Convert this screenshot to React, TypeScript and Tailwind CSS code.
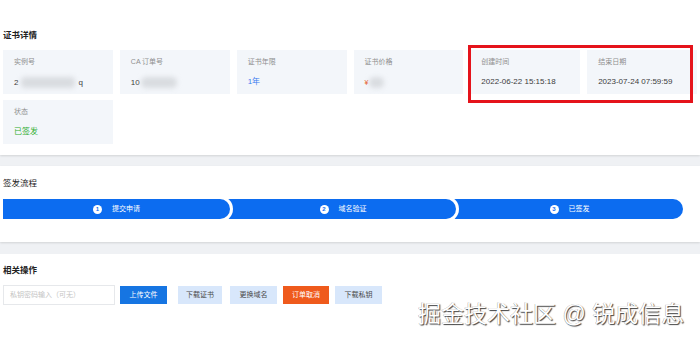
import React from "react";

const font = { fontFamily: '"Liberation Sans", "Noto Sans CJK SC", sans-serif' };

type Info = { label: string; value: React.ReactNode };

function Blur({ w, round }: { w: number; round?: boolean }) {
  return (
    <span
      className={
        "inline-block h-[11px] bg-[#d9dce0] blur-[2.5px] align-middle " +
        (round ? "rounded-full" : "rounded-[4px]")
      }
      style={{ width: w }}
    />
  );
}

function InfoCard({ label, value }: Info) {
  return (
    <div className="h-[44px] bg-[#f3f6fa] pl-[11px] pt-[8px] flex flex-col">
      <div className="text-[7px] leading-[8px] text-[#8f8f8f]">{label}</div>
      <div className="mt-[11px] text-[8px] leading-[10px] text-[#3c3c3c] whitespace-nowrap flex items-center">
        {value}
      </div>
    </div>
  );
}

function Step({
  n,
  text,
  className,
  z,
}: {
  n: number;
  text: string;
  className: string;
  z: string;
}) {
  return (
    <div
      className={
        "relative h-[20px] bg-[#0c6cf0] rounded-r-full ring-[3px] ring-white flex items-center justify-center gap-[10px] text-white text-[7px] " +
        className +
        " " +
        z
      }
    >
      <span className="w-[9px] h-[9px] rounded-full bg-white text-[#0c6cf0] text-[6px] font-bold flex items-center justify-center leading-none">
        {n}
      </span>
      <span>{text}</span>
    </div>
  );
}

export default function App() {
  const cards: Info[] = [
    {
      label: "实例号",
      value: (
        <>
          <span>2</span>
          <span className="ml-[3px]">
            <Blur w={54} />
          </span>
          <span className="ml-[3px]">q</span>
        </>
      ),
    },
    {
      label: "CA 订单号",
      value: (
        <>
          <span>10</span>
          <span className="ml-[1px]">
            <Blur w={36} round />
          </span>
        </>
      ),
    },
    { label: "证书年限", value: <span className="text-[#3b7cf0]">1年</span> },
    {
      label: "证书价格",
      value: (
        <>
          <span className="text-[#e8541c] text-[7px]">¥</span>
          <span className="ml-[1px]">
            <Blur w={15} round />
          </span>
        </>
      ),
    },
    { label: "创建时间", value: "2022-06-22 15:15:18" },
    { label: "结束日期", value: "2023-07-24 07:59:59" },
    { label: "状态", value: <span className="text-[#2fae2f]">已签发</span> },
  ];

  return (
    <div
      className="relative h-[341px] w-[700px] overflow-hidden bg-[#eff1f4]"
      style={font}
    >
      {/* 证书详情 */}
      <div className="bg-white pt-[30px] pb-[11px] px-[3px] shadow-[0_1px_2px_rgba(0,0,0,0.12)]">
        <div className="text-[8.5px] leading-[10px] font-bold text-[#222]">证书详情</div>
        <div className="mt-[10px] grid grid-cols-6 gap-x-[7px] gap-y-[6px]">
          {cards.map((c) => (
            <InfoCard key={c.label} {...c} />
          ))}
        </div>
      </div>

      {/* 签发流程 */}
      <div className="mt-[11px] bg-white pt-[12px] pb-[23px] px-[3px] shadow-[0_1px_2px_rgba(0,0,0,0.12)]">
        <div className="text-[8.5px] leading-[10px] text-[#222]">签发流程</div>
        <div className="mt-[11px] w-[680px] flex">
          <Step n={1} text="提交申请" className="w-[227px]" z="z-30" />
          <Step n={2} text="域名验证" className="w-[236px] -ml-[10px] pl-[10px]" z="z-20" />
          <Step n={3} text="已签发" className="flex-1 -ml-[10px] pl-[10px]" z="z-10" />
        </div>
      </div>

      {/* 相关操作 */}
      <div className="mt-[12px] h-[100px] bg-white pt-[11px] px-[3px]">
        <div className="text-[8.5px] leading-[10px] font-bold text-[#222]">相关操作</div>
        <div className="mt-[10px] flex items-center text-[7px]">
          <div className="w-[112px] h-[20px] border border-[#e6e8eb] flex items-center pl-[6px] text-[#c4c4c4]">
            私钥密码输入（可无）
          </div>
          <button className="ml-[5px] w-[47px] h-[18px] bg-[#1675e2] text-white">上传文件</button>
          <button className="ml-[11px] w-[44px] h-[18px] bg-[#d8e7fb] text-[#4a4a4a]">下载证书</button>
          <button className="ml-[8px] w-[47px] h-[18px] bg-[#d8e7fb] text-[#4a4a4a]">更换域名</button>
          <button className="ml-[6px] w-[46px] h-[18px] bg-[#ef5a1c] text-white">订单取消</button>
          <button className="ml-[6px] w-[47px] h-[18px] bg-[#d8e7fb] text-[#4a4a4a]">下载私钥</button>
        </div>
      </div>

      {/* annotation box */}
      <div className="absolute left-[468px] top-[45px] w-[225px] h-[58px] border-[3px] border-[#e5131b]" />

      {/* watermark */}
      <div className="absolute left-[418px] top-[300px] text-[23px] leading-[28px] text-white whitespace-nowrap [text-shadow:1px_1px_1px_rgba(0,0,0,0.75),-0.5px_-0.5px_0_rgba(0,0,0,0.35)]">
        掘金技术社区 @ 锐成信息
      </div>
    </div>
  );
}
